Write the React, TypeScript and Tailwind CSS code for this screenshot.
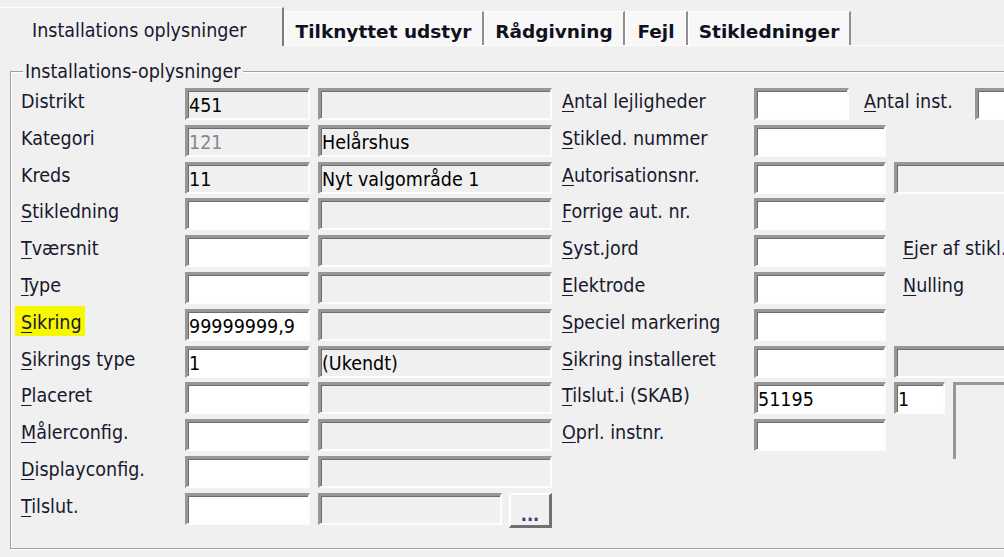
import type { ReactNode } from "react";

type Row = {
  label: string;
  acc?: boolean;
  hl?: boolean;
  v1?: string;
  ro1?: boolean;
  muted?: boolean;
  v2?: string;
  mid?: string;
  midValue?: string;
  extra?: "antal" | "gray" | "ejer" | "nulling" | "skab";
  button?: boolean;
};

const rows: Row[] = [
  { label: "Distrikt", v1: "451", ro1: true, mid: "Antal lejligheder", extra: "antal" },
  { label: "Kategori", v1: "121", ro1: true, muted: true, v2: "Helårshus", mid: "Stikled. nummer" },
  { label: "Kreds", v1: "11", ro1: true, v2: "Nyt valgområde 1", mid: "Autorisationsnr.", extra: "gray" },
  { label: "Stikledning", acc: true, mid: "Forrige aut. nr." },
  { label: "Tværsnit", acc: true, mid: "Syst.jord", extra: "ejer" },
  { label: "Type", acc: true, mid: "Elektrode", extra: "nulling" },
  { label: "Sikring", acc: true, hl: true, v1: "99999999,9", mid: "Speciel markering" },
  { label: "Sikrings type", acc: true, v1: "1", v2: "(Ukendt)", mid: "Sikring installeret", extra: "gray" },
  { label: "Placeret", acc: true, mid: "Tilslut.i (SKAB)", midValue: "51195", extra: "skab" },
  { label: "Målerconfig.", acc: true, mid: "Oprl. instnr." },
  { label: "Displayconfig.", acc: true },
  { label: "Tilslut.", acc: true, button: true },
];

// sunken win32 edit box
function Edit({
  className,
  value,
  readOnly,
  muted,
}: {
  className: string;
  value?: string;
  readOnly?: boolean;
  muted?: boolean;
}) {
  return (
    <div
      className={`flex h-[32px] shrink-0 items-center overflow-hidden whitespace-nowrap border-t-[3px] border-l-[3px] border-r-2 border-b-2 border-t-[#979797] border-l-[#979797] border-r-[#fdfdfd] border-b-[#fdfdfd] pl-[1px] pt-[2px] shadow-[inset_1px_1px_0_#6d6d6d] ${
        readOnly ? "bg-[#f0f0f0]" : "bg-white"
      } ${muted ? "text-[#86868f]" : "text-black"} ${className}`}
    >
      {value}
    </div>
  );
}

function Label({ text, acc, className = "" }: { text: string; acc?: boolean; className?: string }) {
  return (
    <span className={`whitespace-nowrap text-[#18182e] ${className}`}>
      {acc ? (
        <>
          <u className="underline decoration-1 underline-offset-[3px]">{text[0]}</u>
          {text.slice(1)}
        </>
      ) : (
        text
      )}
    </span>
  );
}

function Extra({ kind }: { kind?: Row["extra"] }): ReactNode {
  if (kind === "gray") return <Edit className="ml-[8px] w-[130px]" readOnly />;
  if (kind === "ejer") return <Label text="Ejer af stikl." acc className="ml-[17px] pt-[2px]" />;
  if (kind === "nulling") return <Label text="Nulling" acc className="ml-[17px] pt-[2px]" />;
  if (kind === "skab")
    return (
      <>
        <Edit className="ml-[8px] w-[51px]" value="1" />
        <div className="ml-[8px] h-[77px] w-[60px] shrink-0 border-t-[3px] border-l-[3px] border-t-[#979797] border-l-[#979797] bg-[#f0f0f0]" />
      </>
    );
  return null;
}

function Tab({ label, className }: { label: string; className: string }) {
  return (
    <div
      className={`h-full shrink-0 border-t border-l border-white border-r-2 border-r-[#8f8f8f] bg-[#f8f8f8] pt-[8px] text-center font-['DejaVu_Sans',sans-serif] text-[18.5px] font-bold leading-[23px] text-[#101020] ${className}`}
    >
      {label}
    </div>
  );
}

export default function App() {
  return (
    <div className="h-[557px] w-[1004px] overflow-hidden bg-[#f0f0f0] font-['DejaVu_Sans_Condensed','Liberation_Sans',sans-serif] text-[19.5px] leading-[23px]">
      {/* tab strip */}
      <div className="flex h-[46px] items-end">
        <div className="h-[39px] w-[284px] shrink-0 border-t border-white border-r-2 border-r-[#7c7c7c] pl-[32px] pt-[11px] text-[#18182e]">
          Installations oplysninger
        </div>
        <div className="flex h-[35px] flex-1 border-b border-white">
          <Tab label="Tilknyttet udstyr" className="w-[200px]" />
          <Tab label="Rådgivning" className="w-[141px]" />
          <Tab label="Fejl" className="w-[63px]" />
          <Tab label="Stikledninger" className="w-[163px]" />
          <div className="flex-1" />
        </div>
      </div>

      {/* group box */}
      <fieldset className="ml-[10px] mt-[14px] w-[1020px] border border-[#a0a0a0] pb-[18px] pl-[10px] pt-[5px] shadow-[inset_1px_1px_0_#fff,1px_1px_0_#fff]">
        <legend className="ml-[2px] bg-[#f0f0f0] px-[2px] text-[#18182e]">Installations-oplysninger</legend>
        {rows.map((r) => (
          <div key={r.label} className="flex h-[36.8px] items-start">
            <div className="w-[164px] shrink-0 pt-[2px]">
              {r.hl ? (
                <span className="-ml-[6px] bg-[#f7f700] pb-[2px] pl-[6px] pr-[3px] pt-[5px]">
                  <Label text={r.label} acc={r.acc} />
                </span>
              ) : (
                <Label text={r.label} acc={r.acc} />
              )}
            </div>
            <Edit className="w-[125px]" value={r.v1} readOnly={r.ro1} muted={r.muted} />
            {r.button ? (
              <>
                <Edit className="ml-[8px] w-[184px]" readOnly />
                <div className="ml-[7px] flex h-[35px] w-[43px] shrink-0 items-end justify-center border-t-2 border-l-2 border-r-[3px] border-b-[3px] border-t-white border-l-white border-r-[#707070] border-b-[#707070] pb-[1px] text-[18px] font-bold leading-[18px] text-[#3a3a7a]">
                  ...
                </div>
              </>
            ) : (
              <Edit className="ml-[8px] w-[234px]" value={r.v2} readOnly />
            )}
            {r.mid && (
              <>
                <div className="ml-[10px] w-[192px] shrink-0 pt-[2px]">
                  <Label text={r.mid} acc />
                </div>
                {r.extra === "antal" ? (
                  <>
                    <Edit className="w-[95px]" />
                    <div className="ml-[15px] w-[111px] shrink-0 pt-[2px]">
                      <Label text="Antal inst." acc />
                    </div>
                    <Edit className="w-[40px]" />
                  </>
                ) : (
                  <>
                    <Edit className="w-[132px]" value={r.midValue} />
                    <Extra kind={r.extra} />
                  </>
                )}
              </>
            )}
          </div>
        ))}
      </fieldset>
    </div>
  );
}
